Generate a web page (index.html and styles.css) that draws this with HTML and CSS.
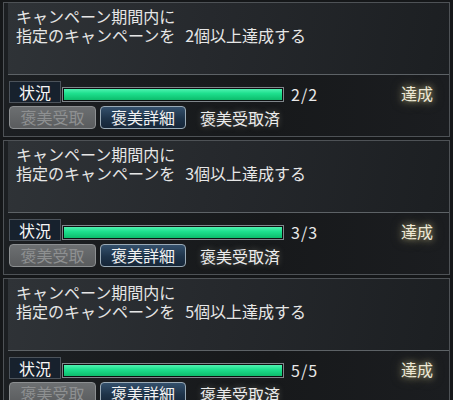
FILE: index.html
```html
<!DOCTYPE html>
<html lang="ja">
<head>
    <meta charset="UTF-8">
    <title>キャンペーン</title>
    <link rel="stylesheet" href="styles.css">
</head>
<body>
    <div class="list">
        <div class="card">
            <div class="desc">
                <div>キャンペーン期間内に</div>
                <div>指定のキャンペーンを<span class="goal">2個以上達成する</span></div>
            </div>
            <div class="status-row">
                <span class="label">状況</span>
                <div class="bar"><div class="fill" style="width: 100%"></div></div>
                <span class="count">2/2</span>
                <span class="done">達成</span>
            </div>
            <div class="btn-row">
                <button class="btn disabled">褒美受取</button>
                <button class="btn detail">褒美詳細</button>
                <span class="received">褒美受取済</span>
            </div>
        </div>
        <div class="card">
            <div class="desc">
                <div>キャンペーン期間内に</div>
                <div>指定のキャンペーンを<span class="goal">3個以上達成する</span></div>
            </div>
            <div class="status-row">
                <span class="label">状況</span>
                <div class="bar"><div class="fill" style="width: 100%"></div></div>
                <span class="count">3/3</span>
                <span class="done">達成</span>
            </div>
            <div class="btn-row">
                <button class="btn disabled">褒美受取</button>
                <button class="btn detail">褒美詳細</button>
                <span class="received">褒美受取済</span>
            </div>
        </div>
        <div class="card">
            <div class="desc">
                <div>キャンペーン期間内に</div>
                <div>指定のキャンペーンを<span class="goal">5個以上達成する</span></div>
            </div>
            <div class="status-row">
                <span class="label">状況</span>
                <div class="bar"><div class="fill" style="width: 100%"></div></div>
                <span class="count">5/5</span>
                <span class="done">達成</span>
            </div>
            <div class="btn-row">
                <button class="btn disabled">褒美受取</button>
                <button class="btn detail">褒美詳細</button>
                <span class="received">褒美受取済</span>
            </div>
        </div>
    </div>
</body>
</html>
```

FILE: styles.css
```css
body {
    margin: 0;
    background: #151719;
    font-family: "Noto Sans CJK JP", "Noto Sans", sans-serif;
    color: #e8e8e8;
    overflow: hidden;
}
.list {
    display: flex;
    flex-direction: column;
    gap: 3px;
    padding: 2px 3px 0;
}
.card {
    height: 135px;
    box-sizing: border-box;
    flex-shrink: 0;
    border: 1px solid #4e5256;
    background: linear-gradient(90deg, #1c1f22 0%, #17191b 60%, #1b1d20 100%);
    display: flex;
    flex-direction: column;
}
.desc {
    height: 72px;
    box-sizing: border-box;
    margin-left: 4px;
    padding: 4px 0 0 8px;
    font-size: 16px;
    line-height: 19px;
    background: linear-gradient(100deg, #2f3337 0%, #26292d 45%, #1c1f22 100%);
    border-bottom: 1px solid #5d6266;
    color: #e6e6e6;
}
.desc div {
    height: 19px;
    overflow: visible;
}
.goal {
    margin-left: 10px;
}

/* status row */
.status-row {
    display: flex;
    align-items: center;
    height: 22px;
    margin-top: 6px;
    padding-left: 5px;
}
.label {
    width: 52px;
    height: 22px;
    box-sizing: border-box;
    border: 1px solid #4c535b;
    background: #17212d;
    font-size: 16px;
    line-height: 20px;
    text-align: center;
    color: #f6f6f6;
}
.bar {
    width: 222px;
    height: 15px;
    box-sizing: border-box;
    margin-left: 1px;
    margin-top: 4px;
    border: 1px solid #80868b;
    background: #0c0f10;
    padding: 1px;
}
.fill {
    height: 100%;
    background: linear-gradient(180deg, #4ff2b0 0%, #1ee08e 40%, #0dbc6c 100%);
}
.count {
    margin-left: 7px;
    margin-top: 3px;
    font-size: 16px;
    letter-spacing: 1px;
    color: #e8e8e8;
}
.done {
    margin-left: auto;
    margin-right: 16px;
    margin-top: 2px;
    font-size: 16px;
    color: #ece8d6;
    text-shadow: 0 0 6px rgba(220, 210, 150, 0.7), 0 0 12px rgba(200, 190, 130, 0.5);
}

/* buttons */
.btn-row {
    display: flex;
    align-items: center;
    gap: 4px;
    height: 23px;
    margin-top: 3px;
    padding-left: 5px;
}
.btn {
    width: 87px;
    height: 23px;
    box-sizing: border-box;
    border-radius: 4px;
    font-family: inherit;
    font-size: 16px;
    line-height: 19px;
    padding: 0;
}
.disabled {
    border: 1px solid #8c8f91;
    background: linear-gradient(180deg, #6c6f71 0%, #5a5c5e 100%);
    color: #8e9091;
}
.detail {
    width: 86px;
    border: 1px solid #9aaab6;
    background: linear-gradient(180deg, #34506c 0%, #1e3349 55%, #162638 100%);
    color: #f2f2f2;
}
.received {
    margin-left: 10px;
    font-size: 16px;
    color: #ececec;
    text-shadow: 0 0 6px rgba(200, 200, 180, 0.4);
}
```
